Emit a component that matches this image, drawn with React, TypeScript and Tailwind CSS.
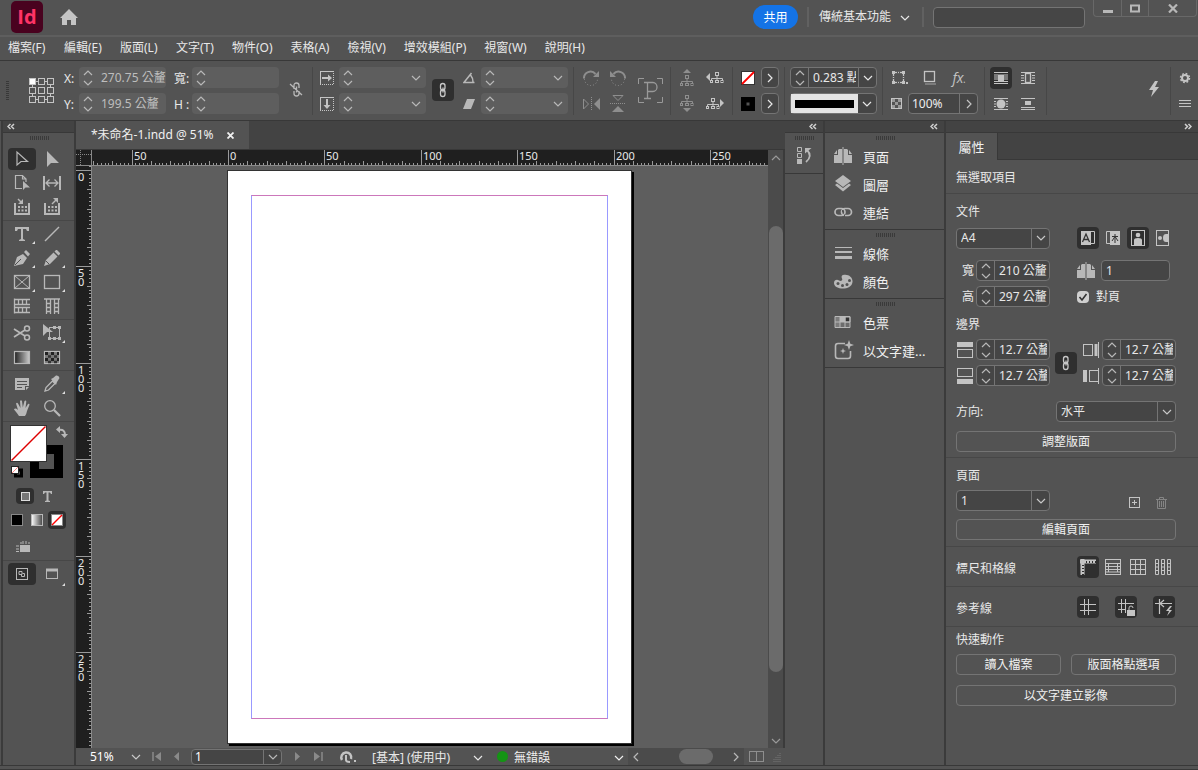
import { ReactNode } from 'react'

interface IconProps {
  w?: number
  h?: number
  className?: string
  children: ReactNode
}

function Icon({ w = 18, h = 18, className = '', children }: IconProps) {
  return (
    <svg
      width={w}
      height={h}
      viewBox={`0 0 ${w} ${h}`}
      fill="none"
      stroke="currentColor"
      className={`shrink-0 ${className}`}
      aria-hidden="true"
    >
      {children}
    </svg>
  )
}

const solid = { fill: 'currentColor', stroke: 'none' }

function Chevron({ dir = 'down', className = '' }: { dir?: string; className?: string }) {
  const paths: Record<string, string> = {
    down: 'M1 3l4 4 4-4',
    up: 'M1 7l4-4 4 4',
    right: 'M3 1l4 4-4 4',
    left: 'M7 1L3 5l4 4',
  }
  return (
    <Icon w={10} h={10} className={className}>
      <path d={paths[dir]} strokeWidth="1.200" />
    </Icon>
  )
}

function Collapse({ right = false }: { right?: boolean }) {
  return (
    <Icon w={8} h={7}>
      <path d={right ? 'M1 1l2.500 2.500L1 6M4.500 1L7 3.500 4.500 6' : 'M3.500 1L1 3.500 3.500 6M7 1L4.500 3.500 7 6'} strokeWidth="1.500" />
    </Icon>
  )
}

function Gripper() {
  return (
    <Icon w={20} h={5} className="text-[#3a3a3a]">
      <path d="M.5 2.500h19" strokeWidth="4" strokeDasharray="1 1" shapeRendering="crispEdges" />
    </Icon>
  )
}

function LinkIcon() {
  return (
    <Icon w={8} h={16} className="text-[#c8c8c8]">
      <rect x="1.500" y="1.500" width="4.500" height="6.500" rx="2.200" strokeWidth="1.300" />
      <rect x="1.500" y="8" width="4.500" height="6.500" rx="2.200" strokeWidth="1.300" />
      <path d="M4 5.500v5" strokeWidth="1.300" />
    </Icon>
  )
}

function PagesIcon() {
  return (
    <Icon w={18} h={20}>
      <path {...solid} d="M8 3v14H0V9h4V4l1-1zM10 3h3l1 1v5h4v8h-8zM0 8l3-4v4zM18 8l-3-4v4z" />
      <path d="M9 1v18" strokeWidth="1" />
    </Icon>
  )
}

function Checker() {
  return (
    <Icon w={11} h={11}>
      <rect x=".5" y=".5" width="10" height="10" />
      <path d="M1 2.500h3m3 0h3M4 5.500h3M1 8.500h3m3 0h3" strokeWidth="3" className="text-[#999]" />
    </Icon>
  )
}

function Sep() {
  return <div className="h-12 w-px shrink-0 bg-[#474747]" />
}

function Spinner({ label }: { label: string }) {
  return (
    <span className="flex w-[17px] shrink-0 flex-col items-center justify-center text-[#b8b8b8]">
      <button aria-label={`增加${label}`}><Chevron dir="up" /></button>
      <button aria-label={`減少${label}`}><Chevron /></button>
    </span>
  )
}

// dim field used by the control bar while nothing is selected
function DimField({ label, value = '', drop = false }: { label: string; value?: string; drop?: boolean }) {
  return (
    <span className="flex h-[21px] w-[87px] items-stretch rounded-sm bg-[#5e5e5e]">
      <Spinner label={label} />
      <input
        aria-label={label}
        defaultValue={value}
        className="w-0 flex-1 bg-transparent pl-[5px] text-[#bdbdbd] outline-none"
      />
      {drop && (
        <button aria-label={`${label}選項`} className="flex w-5 items-center justify-center text-[#b8b8b8]">
          <Chevron />
        </button>
      )}
    </span>
  )
}

function NumberField({ label, value, className = 'w-[74px]' }: { label: string; value: string; className?: string }) {
  return (
    <span className={`flex h-[21px] shrink-0 rounded-sm border border-[#747474] bg-[#454545] ${className}`}>
      <Spinner label={label} />
      <input
        aria-label={label}
        defaultValue={value}
        className="mr-0.5 w-0 flex-1 border-l border-[#747474] bg-transparent pl-1 outline-none"
      />
    </span>
  )
}

function SelectField({ label, value, className = 'w-[94px]' }: { label: string; value: string; className?: string }) {
  return (
    <span className={`flex h-[21px] shrink-0 rounded-sm border border-[#747474] bg-[#454545] ${className}`}>
      <select aria-label={label} className="w-0 flex-1 appearance-none bg-transparent pl-1 outline-none">
        <option>{value}</option>
      </select>
      <span className="flex w-[18px] items-center justify-center border-l border-[#747474] text-[#c8c8c8]">
        <Chevron />
      </span>
    </span>
  )
}

function IconButton({ label, active = false, children }: { label: string; active?: boolean; children: ReactNode }) {
  return (
    <button
      aria-label={label}
      className={`flex size-[22px] shrink-0 items-center justify-center rounded-sm ${active ? 'bg-[#2f2f2f]' : ''}`}
    >
      {children}
    </button>
  )
}

const menus = ['檔案(F)', '編輯(E)', '版面(L)', '文字(T)', '物件(O)', '表格(A)', '檢視(V)', '增效模組(P)', '視窗(W)', '說明(H)']

function TitleBar() {
  return (
    <header className="flex h-[37px] shrink-0 items-start border-b-2 border-[#5e5e5e]">
      <div className="ml-[11px] mt-px flex size-8 items-center justify-center rounded-[5px] bg-[#49021f] font-['Open_Sans'] text-xl font-bold leading-none text-[#ff3366]">
        Id
      </div>
      <button aria-label="首頁" className="ml-[17px] mt-[9px] text-[#c4c4c4]">
        <Icon w={18} h={17}>
          <path {...solid} d="M9 0l9 9h-2v7h-5v-5H7v5H2V9H0z" />
        </Icon>
      </button>
      <div className="ml-auto flex items-start">
        <button className="mt-[5px] h-6 w-[45px] rounded-full bg-[#1473e6] pt-0.5 text-white">共用</button>
        <div className="ml-[9px] mt-[7px] h-5 w-0.5 bg-[#616161]" />
        <button className="ml-[10px] mt-2 flex h-[18px] items-center gap-[9px]">
          傳統基本功能
          <Chevron className="mt-0.5" />
        </button>
        <div className="ml-3 mt-[7px] h-5 w-0.5 bg-[#616161]" />
        <input aria-label="搜尋" className="ml-[9px] mt-[7px] h-[21px] w-[152px] rounded-sm border border-[#747474] bg-[#464646] px-2 outline-none" />
        <div className="ml-2 mr-px flex h-[17px] divide-x divide-[#686868] rounded-b-sm border border-t-0 border-[#686868] text-[#b8b8b8]">
          <button aria-label="最小化" className="flex w-7 items-center justify-center">
            <Icon w={10} h={9}><path d="M0 7.500h10" strokeWidth="3" /></Icon>
          </button>
          <button aria-label="最大化" className="flex w-[27px] items-center justify-center">
            <Icon w={10} h={9}><rect x="1" y="1.500" width="8" height="6" strokeWidth="2" /></Icon>
          </button>
          <button aria-label="關閉" className="flex w-[47px] items-center justify-center">
            <Icon w={10} h={9}><path d="M1 .5l8 8M9 .5l-8 8" strokeWidth="2.200" /></Icon>
          </button>
        </div>
      </div>
    </header>
  )
}

function TreeIcon({ dir }: { dir: 'up' | 'down' | 'left' | 'right' }) {
  const tree = (
    <>
      <rect x="5.500" y=".5" width="3" height="3" />
      <path d="M7 4v2M1.500 9V6.500h11V9M7 6v3" />
      <rect x=".5" y="8.500" width="2" height="2" />
      <rect x="5.500" y="8.500" width="3" height="2" />
      <rect x="11" y="8.500" width="2" height="2" />
    </>
  )
  if (dir === 'up' || dir === 'down') {
    return (
      <Icon w={14} h={17} className="text-[#8e8e8e]">
        <g transform={dir === 'up' ? 'translate(0 6)' : undefined}>{tree}</g>
        <path {...solid} d={dir === 'up' ? 'M7 0l4 4H3z' : 'M3 13h8l-4 4z'} />
      </Icon>
    )
  }
  return (
    <Icon w={18} h={11} className="text-[#c4c4c4]">
      <g transform={dir === 'left' ? 'translate(4 0)' : undefined}>{tree}</g>
      <path {...solid} d={dir === 'left' ? 'M4 1v8L0 5z' : 'M14 1v8l4-4z'} />
    </Icon>
  )
}

function ReferencePoint() {
  const spots = [0, 9, 18]
  return (
    <Icon w={25} h={25} className="text-[#c4c4c4]">
      <path d="M6 3.500h3m6 0h4M6 21.500h3m6 0h4M3.500 6v4m0 5v4M21.500 6v4m0 5v4" />
      {spots.map((y) =>
        spots.map((x) => (
          <rect key={`${x}-${y}`} x={x + 0.5} y={y + 0.5} width="6" height="6" fill={x + y === 0 ? '#fff' : 'none'} />
        )),
      )}
    </Icon>
  )
}

function WrapIcon({ children }: { children?: ReactNode }) {
  return (
    <Icon w={14} h={14} className="text-[#c4c4c4]">
      <path d="M0 1.500h14M0 12.500h14" />
      {children}
    </Icon>
  )
}

function ControlBar() {
  return (
    <div className="flex h-[60px] shrink-0 items-start overflow-hidden border-t border-[#383838] pt-1.5">
      <Icon w={3} h={20} className="ml-1.5 mt-3.5 text-[#383838]">
        <path d="M1.500 0v20" strokeWidth="3" strokeDasharray="1 1" />
      </Icon>
      <button aria-label="參考點" className="ml-5 mt-[11px]"><ReferencePoint /></button>

      <div className="ml-2.5 flex flex-col gap-[5px]">
        <label className="flex items-center"><span className="w-[15px] pt-0.5">X:</span><DimField label="X 位置" value="270.75 公釐" /></label>
        <label className="flex items-center"><span className="w-[15px] pt-0.5">Y:</span><DimField label="Y 位置" value="199.5 公釐" /></label>
      </div>
      <div className="ml-2 flex flex-col gap-[5px]">
        <label className="flex items-center"><span className="w-[18px] whitespace-nowrap pt-0.5">寬:</span><DimField label="寬度" /></label>
        <label className="flex items-center"><span className="w-[18px] whitespace-nowrap pt-0.5">H :</span><DimField label="高度" /></label>
      </div>
      <button aria-label="強制寬高等比例" className="ml-[10px] mr-[9px] mt-[15px] text-[#b8b8b8]">
        <Icon w={14} h={15}>
          <path d="M5 7V3.500q0-2.500 2.500-2.500T10 3.500V6M5 9v2.500Q5 14 7.500 14t2.500-2.500V9M7.500 4.500v6M1 2l12 11" strokeWidth="1.300" />
        </Icon>
      </button>
      <Sep />

      <div className="ml-[7px] flex flex-col gap-[5px] text-[#c4c4c4]">
        <div className="flex items-center gap-[5px]">
          <Icon w={14} h={14}>
            <path d="M2 13.500h12M13.500 2v12" strokeDasharray="1 1" />
            <path d="M0 .5h14M.5 0v14" />
            <path d="M2 7h7" strokeWidth="2" /><path {...solid} d="M8 3.500L12 7l-4 3.500z" />
          </Icon>
          <DimField label="X 縮放" drop />
        </div>
        <div className="flex items-center gap-[5px]">
          <Icon w={14} h={14}>
            <path d="M2 13.500h12M13.500 2v12" strokeDasharray="1 1" />
            <path d="M0 .5h14M.5 0v14" />
            <path d="M7 2v7" strokeWidth="2" /><path {...solid} d="M3.500 8h7L7 12z" />
          </Icon>
          <DimField label="Y 縮放" drop />
        </div>
      </div>
      <button aria-label="強制縮放等比例" className="ml-1.5 mt-3 flex size-[22px] items-center justify-center rounded-sm bg-[#2f2f2f]">
        <LinkIcon />
      </button>
      <div className="ml-[9px] mr-[5px] flex flex-col gap-[5px] text-[#b8b8b8]">
        <div className="flex items-center gap-1.5">
          <Icon w={12} h={12}><path d="M8.500 1L1 10.500h10.500M7.500 3q2.500 3 2.500 7" strokeWidth="1.500" /></Icon>
          <DimField label="旋轉角度" drop />
        </div>
        <div className="flex items-center gap-1.5">
          <Icon w={12} h={12}><path {...solid} d="M4 1h8l-4 10H0z" /></Icon>
          <DimField label="傾斜角度" drop />
        </div>
      </div>
      <Sep />

      <div className="ml-[9px] grid grid-cols-[16px_16px] gap-x-[11px] gap-y-[5px] text-[#8e8e8e]">
        <button aria-label="順時針旋轉" className="flex h-[21px] items-center">
          <Icon w={16} h={16}>
            <path d="M1 8.500a6.500 6.500 0 0 1 11.500-4.500" strokeWidth="2" /><path {...solid} d="M16 1v6h-6z" />
            <path d="M1.500 9a6.500 6.500 0 0 0 13 0" strokeDasharray="1 2" />
          </Icon>
        </button>
        <button aria-label="逆時針旋轉" className="flex h-[21px] items-center">
          <Icon w={16} h={16}>
            <path d="M15 8.500A6.500 6.500 0 0 0 3.500 4" strokeWidth="2" /><path {...solid} d="M0 1v6h6z" />
            <path d="M14.500 9a6.500 6.500 0 0 1-13 0" strokeDasharray="1 2" />
          </Icon>
        </button>
        <button aria-label="水平翻轉" className="flex h-[21px] items-center">
          <Icon w={17} h={14}>
            <path d="M.5 2v10l5-5z" /><path {...solid} d="M17 1v12l-6-6z" /><path d="M8.500 0v14" strokeDasharray="1 1" />
          </Icon>
        </button>
        <button aria-label="垂直翻轉" className="flex h-[21px] items-center">
          <Icon w={16} h={17}>
            <path d="M3 .5h10l-5 5z" /><path {...solid} d="M2 17h12l-6-6z" /><path d="M0 8.500h16" strokeDasharray="1 1" />
          </Icon>
        </button>
      </div>
      <div className="ml-3 mr-[7px] mt-[11px] flex size-[25px] items-center justify-center text-[#999]">
        <Icon w={25} h={25}>
          <path d="M.5 6V.5H6M19 .5h5.500V6M.5 19v5.500H6M19 24.500h5.500V19" />
          <path d="M6 4.500h9a4 4.500 0 0 1 0 9H9.500M9.500 4.500v16M6 20.500h7" strokeWidth="1.300" />
        </Icon>
      </div>
      <Sep />

      <div className="ml-[9px] mr-2 grid grid-cols-[14px_18px] gap-x-3 gap-y-[5px]">
        <button aria-label="選取容器" className="flex h-[21px] items-center"><TreeIcon dir="up" /></button>
        <button aria-label="上一個物件" className="flex h-[21px] items-center"><TreeIcon dir="left" /></button>
        <button aria-label="選取內容" className="flex h-[21px] items-center"><TreeIcon dir="down" /></button>
        <button aria-label="下一個物件" className="flex h-[21px] items-center"><TreeIcon dir="right" /></button>
      </div>
      <Sep />

      <div className="ml-[8px] mr-[5px] flex flex-col gap-[5px]">
        <div className="flex h-[21px] items-center gap-1.5">
          <Icon w={14} h={14}>
            <rect x=".5" y=".5" width="13" height="13" fill="#fff" stroke="#333" /><path d="M1 13L13 1" stroke="#f00" strokeWidth="1.800" />
          </Icon>
          <button aria-label="填色選項" className="flex h-[21px] w-[18px] items-center justify-center rounded-sm border border-[#747474] bg-[#454545]"><Chevron dir="right" /></button>
        </div>
        <div className="flex h-[21px] items-center gap-1.5">
          <Icon w={14} h={14}>
            <rect width="14" height="14" fill="#000" stroke="none" /><rect x="5.500" y="5.500" width="3" height="3" fill="#535353" stroke="none" />
          </Icon>
          <button aria-label="線條選項" className="flex h-[21px] w-[18px] items-center justify-center rounded-sm border border-[#747474] bg-[#454545]"><Chevron dir="right" /></button>
        </div>
      </div>
      <Sep />

      <div className="ml-[5px] mr-[5px] flex w-[87px] flex-col gap-[5px]">
        <div className="flex">
          <NumberField label="線條寬度" value="0.283 點" className="w-[69px] rounded-r-none" />
          <button aria-label="線條寬度選項" className="-ml-px flex w-[19px] items-center justify-center rounded-r-sm border border-[#747474] bg-[#454545]"><Chevron /></button>
        </div>
        <button aria-label="線條樣式" className="flex h-[21px] rounded-sm border border-[#747474] bg-[#454545]">
          <span className="flex h-full flex-1 items-center bg-[#e4e4e4] px-1"><span className="h-2 w-full bg-black" /></span>
          <span className="flex h-full w-[18px] items-center justify-center"><Chevron /></span>
        </button>
      </div>
      <Sep />

      <div className="ml-2 mr-1.5 flex w-[87px] flex-col gap-[5px] text-[#c4c4c4]">
        <div className="flex h-[21px] items-center justify-between pl-px pr-3">
          <button aria-label="轉角選項">
            <Icon w={16} h={14}>
              <rect x="1.500" y="1.500" width="10" height="10" strokeWidth="1.300" />
              <path d="M5 1.500h3M5 11.500h3M1.500 5v3M11.500 5v3" stroke="#535353" strokeDasharray="1 1" strokeWidth="2" />
              <path {...solid} d="M0 0h3v3H0zM10 0h3v3h-3zM0 10h3v3H0zM10 10h3v3h-3zM14 11h2v2h-2z" />
            </Icon>
          </button>
          <button aria-label="陰影">
            <Icon w={14} h={15}><rect x="1.500" y="1.500" width="10" height="10" strokeWidth="1.300" /><path d="M2 14h11" stroke="#7c7c7c" strokeWidth="2" /></Icon>
          </button>
          <button aria-label="效果" className="font-['Open_Sans'] text-sm italic leading-none">fx<span className="text-[10px]">.</span></button>
        </div>
        <div className="flex items-center gap-[6px]">
          <Checker />
          <span className="flex h-[21px] w-[70px] rounded-sm border border-[#747474] bg-[#454545]">
            <input aria-label="不透明度" defaultValue="100%" className="w-0 flex-1 bg-transparent pl-[3px] text-[#eee] outline-none" />
            <button aria-label="不透明度選項" className="flex w-[18px] items-center justify-center border-l border-[#747474]"><Chevron dir="right" /></button>
          </span>
        </div>
      </div>
      <Sep />

      <div className="ml-[5px] mr-[7px] grid grid-cols-[22px_22px] gap-x-[5px] gap-y-1">
        <IconButton label="無繞圖排文" active>
          <WrapIcon><path d="M0 4h14M0 6h14M0 8h14M0 10.500h14" /><path {...solid} d="M4 4h6v6H4z" /></WrapIcon>
        </IconButton>
        <IconButton label="圍繞邊界方框">
          <WrapIcon><path d="M0 4.500h3m8 0h3M0 7h3m8 0h3M0 9.500h3m8 0h3" /><rect x="4.500" y="2.500" width="5" height="9" strokeWidth="1.300" /></WrapIcon>
        </IconButton>
        <IconButton label="圍繞物件形狀">
          <WrapIcon><path d="M0 4.500h2m10 0h2M0 7h2m10 0h2M0 9.500h2m10 0h2" /><circle {...solid} cx="7" cy="7" r="4.500" /></WrapIcon>
        </IconButton>
        <IconButton label="跳過物件">
          <WrapIcon><path {...solid} d="M4 4h6v4H4z" /><path d="M0 10.500h14" /></WrapIcon>
        </IconButton>
      </div>
      <Sep />

      <button aria-label="快速套用" className="ml-auto mr-[11px] mt-[14px] text-[#c4c4c4]">
        <Icon w={10} h={16}><path {...solid} d="M6 0L0 9h4l-2 7 8-10H6l3-6z" /></Icon>
      </button>
      <Sep />
      <div className="ml-2 mr-[7px] flex flex-col gap-[5px] text-[#c4c4c4]">
        <button aria-label="自訂控制面板" className="flex h-[21px] items-center justify-center">
          <Icon w={12} h={12}><circle cx="6" cy="6" r="3" strokeWidth="2" /><circle cx="6" cy="6" r="4.500" strokeWidth="1.500" strokeDasharray="1.770 1.770" /></Icon>
        </button>
        <button aria-label="面板選單" className="flex h-[21px] items-center">
          <Icon w={12} h={9}><path d="M0 1.500h12M0 4.500h12M0 7.500h12" /></Icon>
        </button>
      </div>
    </div>
  )
}

interface Tool {
  name: string
  more?: boolean
  icon: ReactNode
}

const toolGroups: Tool[][] = [
  [
    { name: '選取工具', icon: <path d="M4 2v13l4-3.500h6.500z" strokeWidth="1.200" /> },
    { name: '直接選取工具', icon: <path {...solid} d="M4 1v16l4-4h8z" /> },
    { name: '頁面工具', icon: <><path d="M9 14.500H2.500v-13h7L13 5v3M9.500 1.500V5H13" strokeWidth="1.200" /><path {...solid} d="M10 7v9l2.500-2.500H17z" /></> },
    { name: '間隙工具', icon: <><path d="M1 2v14M17 2v14" strokeWidth="2" /><path d="M3 9h12M6.500 5.500L3 9l3.500 3.500M11.500 5.500L15 9l-3.500 3.500" strokeWidth="1.300" /></> },
    { name: '內容收集器', icon: <><path d="M3 6H2v10h14V6h-1" strokeWidth="2" /><path {...solid} d="M5 8h2v2H5zm3.500 0h2v2h-2zM12 8h2v2h-2zM5 11.500h2v2H5zm3.500 0h2v2h-2zm3.500 0h2v2h-2zM10 1v5H5z" /><path d="M5 1l4 4" strokeWidth="1.500" /></> },
    { name: '內容置入器', icon: <><path d="M3 6H2v10h14V6h-1" strokeWidth="2" /><path {...solid} d="M5 8h2v2H5zm3.500 0h2v2h-2zM12 8h2v2h-2zM5 11.500h2v2H5zm3.500 0h2v2h-2zm3.500 0h2v2h-2zM15 0v5l-5-5z" /><path d="M14 1L9 6" strokeWidth="1.500" /></> },
  ],
  [
    { name: '文字工具', more: true, icon: <path {...solid} d="M2 2h14v4h-2l-1-2h-3v10l2 1v1H6v-1l2-1V4H5L4 6H2z" /> },
    { name: '線段工具', icon: <path d="M2 16L16 2" strokeWidth="1.500" /> },
    { name: '鋼筆工具', more: true, icon: <><path {...solid} d="M1 17L4 8l6-3 4 4-4 6zM11 3l2-2 4 4-2 2.500z" /><path d="M2 16l6-6" stroke="#535353" /></> },
    { name: '鉛筆工具', more: true, icon: <><path {...solid} d="M1 17l2-6 7.500-7.500 4 4L7 15zM11.500 2.500L13 1h1l3 3v1l-1.500 1.500z" /><path d="M3 12l3 3" stroke="#535353" /></> },
    { name: '矩形框架工具', more: true, icon: <><rect x="1.500" y="2.500" width="15" height="13" strokeWidth="1.300" /><path d="M2 3l14 12M16 3L2 15" /></> },
    { name: '矩形工具', more: true, icon: <rect x="1.500" y="2.500" width="15" height="13" strokeWidth="1.300" /> },
    { name: '水平格點工具', icon: <path d="M1.500 1.500v15M1 2.500h16M1 7.500h16M1 10.500h16M1 15.500h16M5.500 3v4m4-4v4m4-4v4M5.500 11v5m4-5v5m4-5v5" strokeWidth="1.300" /> },
    { name: '垂直格點工具', icon: <path d="M1 2h16M3.500 2v15m4-15v15m4-15v15m4-15v15M4 6.500h3m-3 4h3m-3 4h3M12 6.500h3m-3 4h3m-3 4h3" strokeWidth="1.300" /> },
  ],
  [
    { name: '剪刀工具', icon: <><circle cx="14" cy="4.500" r="2.500" strokeWidth="1.500" /><circle cx="14" cy="13.500" r="2.500" strokeWidth="1.500" /><path d="M1 5l11 7M1 13l11-7" strokeWidth="1.700" /></> },
    { name: '任意變形工具', more: true, icon: <><rect x="6.500" y="3.500" width="10" height="11" /><path {...solid} d="M0 0v12l4-4h6zM5 13h3v3H5zM15 2h3v3h-3zM15 13h3v3h-3zM10 2h3v3h-3zM10 13h3v3h-3z" /></> },
    { name: '漸層色票工具', icon: <rect x="1.500" y="3.500" width="15" height="12" fill="url(#toolGradient)" strokeWidth="1.200" /> },
    { name: '漸層羽化工具', icon: <><rect x="1.500" y="3.500" width="15" height="12" strokeWidth="1.200" fill="#777" /><path d="M2 5.500h14M2 11.500h14" stroke="#222" strokeWidth="3" strokeDasharray="3 3" /><path d="M5 8.500h11M5 14h11" stroke="#333" strokeWidth="2.500" strokeDasharray="3 3" /></> },
  ],
  [
    { name: '備註工具', icon: <><path {...solid} d="M2 3h14v8h-4v4H2zM13 12h3l-3 3z" /><path d="M4 6.500h10M4 9.500h10M4 12.500h5" stroke="#535353" /></> },
    { name: '滴管工具', more: true, icon: <><path d="M2 16l1-3.500L9.500 6 12 8.500 5.500 15z" strokeWidth="1.300" /><path {...solid} d="M8 4l2-1 3-2.500q3-.5 3.500 2.500L14 7l-1 3z" /></> },
    { name: '手形工具', icon: <path {...solid} d="M6 17q-2-3-5-6.500 1-2 4 .5L3 4.500q1-1.500 2 0L7.500 9 7 2q1-1.500 2 0l.8 6.500L11.500 2q1.500-1 1.800.5L12.500 9 15 5q1.500-.8 1.500.8L14 12q-.5 3-2 5z" /> },
    { name: '縮放顯示工具', icon: <><circle cx="7" cy="7" r="5.300" strokeWidth="1.300" /><path d="M11 11l6 6" strokeWidth="2.300" /></> },
  ],
]

function ToolPanel() {
  return (
    <aside className="flex w-[75px] shrink-0 flex-col border-x-2 border-[#3b3b3b] text-[#b8b8b8]">
      <button aria-label="收合工具" className="flex h-3 items-center border-b border-[#383838] bg-[#434343] pl-1 text-[#d0d0d0]"><Collapse /></button>
      <div className="flex h-[13px] items-start justify-center pt-[2px]"><Gripper /></div>
      <svg width="0" height="0" className="absolute" aria-hidden="true">
        <linearGradient id="toolGradient"><stop stopColor="#222" /><stop offset="1" stopColor="#ccc" /></linearGradient>
        <linearGradient id="swatchGradient"><stop stopColor="#fff" /><stop offset="1" stopColor="#444" /></linearGradient>
      </svg>
      {toolGroups.map((group, g) => (
        <div key={g} className="border-b border-[#474747] py-px">
          <div className="grid grid-cols-[30px_30px] pl-1">
            {group.map((tool, i) => (
              <button
                key={tool.name}
                aria-label={tool.name}
                className={`relative flex h-6 items-center justify-center ${g === 0 && i === 0 ? 'mx-px my-px h-[22px] rounded-sm bg-[#2f2f2f]' : ''}`}
              >
                <Icon>{tool.icon}</Icon>
                {tool.more && <Icon w={3} h={3} className="absolute bottom-0.5 right-0.5 text-[#ddd]"><path {...solid} d="M3 0v3H0z" /></Icon>}
              </button>
            ))}
          </div>
        </div>
      ))}
      <div className="px-[7px] pt-[3px]">
        <button aria-label="填色與線條" className="block">
          <Icon w={58} h={54}>
            <path d="M24.500 24.500h24v24h-24z" stroke="#000" strokeWidth="9" />
            <rect x=".5" y=".5" width="36" height="36" fill="#fff" stroke="#333" />
            <path d="M1.500 35.500l34-34" stroke="#d00" strokeWidth="1.500" />
            <path d="M49 5q6-1 6 5" strokeWidth="2" /><path {...solid} d="M50 1v7l-4-3.500zM51 9h7l-3.500 4z" />
            <rect x="5.500" y="45" width="6" height="6" stroke="#000" strokeWidth="3" /><rect x="1.500" y="41.500" width="7" height="7" fill="#fff" stroke="#222" />
            <path d="M2 48l6-6" stroke="#f88" />
          </Icon>
        </button>
      </div>
      <div className="mt-2 flex h-[18px] items-center gap-[9px] pl-[13px]">
        <button aria-label="格式設定影響容器" className="flex h-4 w-[18px] items-center justify-center rounded-sm bg-[#2f2f2f]">
          <Icon w={9} h={9}><rect x=".5" y=".5" width="8" height="8" fill="#777" stroke="#ddd" /></Icon>
        </button>
        <button aria-label="格式設定影響文字"><Icon w={10} h={11}><path {...solid} d="M0 0h9v3H8L7 1.500H5.500v8L7 10v1H2v-1l1.500-.5v-8H2L1 3H0z" /></Icon></button>
      </div>
      <div className="mt-[5px] flex h-5 items-center pl-2">
        <button aria-label="套用顏色"><Icon w={13} h={13}><rect x=".5" y=".5" width="11" height="11" fill="#000" stroke="#888" /></Icon></button>
        <button aria-label="套用漸層" className="ml-[7px]"><Icon w={13} h={13}><rect x=".5" y=".5" width="11" height="11" fill="url(#swatchGradient)" /></Icon></button>
        <button aria-label="套用無" className="ml-1 flex size-[18px] items-center justify-center rounded-sm bg-[#2f2f2f]">
          <Icon w={12} h={12}><rect x=".5" y=".5" width="11" height="11" fill="#fff" stroke="#888" /><path d="M1 11L11 1" stroke="#f00" strokeWidth="1.500" /></Icon>
        </button>
      </div>
      <button aria-label="檢視選項" className="mt-2 flex h-[18px] items-center pl-[13px]">
        <Icon w={15} h={12}><path {...solid} d="M4 4h10v7H4z" /><path d="M5 1v2m2-3v3m3-3v3m3-2v2M0 5h3M0 8h3M0 10.500h3" /></Icon>
      </button>
      <div className="mt-1 grid grid-cols-[28px_28px] gap-x-0.5 border-t border-[#474747] pl-[5px] pt-0.5">
        <button aria-label="正常模式" className="flex h-[22px] items-center justify-center rounded-sm bg-[#2f2f2f]">
          <Icon w={12} h={12}><rect x=".5" y=".5" width="11" height="11" /><path d="M3 3.500h3v3H3zM6.500 5.500h2v3h-3V7" /></Icon>
        </button>
        <button aria-label="螢幕模式" className="relative flex h-[22px] items-center justify-center">
          <Icon w={12} h={12}><rect x=".5" y="1.500" width="11" height="9" /><path d="M0 2h12" strokeWidth="3" /></Icon>
          <Icon w={3} h={3} className="absolute -bottom-px right-px text-[#ddd]"><path {...solid} d="M3 0v3H0z" /></Icon>
        </button>
      </div>
    </aside>
  )
}

// pixels for one millimetre at the current zoom level
const SCALE = 1.928
const marks = Array.from({ length: 190 }, (_, i) => (i - 35) * 2)

function Ruler({ origin, vertical = false }: { origin: number; vertical?: boolean }) {
  return (
    <svg
      className={vertical ? 'w-4 flex-1' : 'h-4 w-full overflow-visible'}
      width={vertical ? 16 : 100}
      height={vertical ? 100 : 16}
      aria-hidden="true"
    >
      {marks.map((mm) => {
        const pos = Math.round(origin + mm * SCALE) + 0.5
        const len = mm % 50 === 0 ? 16 : mm % 10 === 0 ? 5 : 3
        return vertical ? (
          <path key={mm} d={`M${16 - len} ${pos}h${len}`} stroke="#9a9a9a" />
        ) : (
          <path key={mm} d={`M${pos} ${16 - len}v${len}`} stroke="#9a9a9a" />
        )
      })}
      {marks
        .filter((mm) => mm % 50 === 0)
        .map((mm) => {
          const pos = Math.round(origin + mm * SCALE)
          const text = String(Math.abs(mm))
          if (!vertical) {
            return <text key={mm} x={pos + 2} y={10} fontSize="11" fill="#e8e8e8" stroke="none">{text}</text>
          }
          return (
            <text key={mm} y={pos + 2} fontSize="11" fill="#e8e8e8" stroke="none">
              {text.split('').map((digit, i) => (
                <tspan key={i} x={2} dy={9}>{digit}</tspan>
              ))}
            </text>
          )
        })}
      <path d={vertical ? 'M15.500 0v1000' : 'M0 15.500h2000'} stroke="#8a8a8a" />
    </svg>
  )
}

function StatusBar() {
  return (
    <div className="flex h-[17px] shrink-0 items-center text-[#b8b8b8]">
      <label className="ml-[14px] flex w-[51px] items-center justify-between text-white">
        <input aria-label="縮放層級" defaultValue="51%" className="w-8 bg-transparent outline-none" />
        <Chevron className="text-[#c8c8c8]" />
      </label>
      <button aria-label="第一頁" className="ml-[11px] text-[#8a8a8a]"><Icon w={9} h={9}><path d="M1 0v9" strokeWidth="1.500" /><path {...solid} d="M9 0v9L3 4.500z" /></Icon></button>
      <button aria-label="上一頁" className="ml-[13px] text-[#8a8a8a]"><Icon w={5} h={9}><path {...solid} d="M5 0v9L0 4.500z" /></Icon></button>
      <span className="ml-3 flex h-4 w-[91px] rounded-sm border border-[#747474] bg-[#454545]">
        <input aria-label="頁碼" defaultValue="1" className="w-0 flex-1 bg-transparent pl-[3px] text-white outline-none" />
        <button aria-label="選擇頁面" className="flex w-[18px] items-center justify-center border-l border-[#747474]"><Chevron /></button>
      </span>
      <button aria-label="下一頁" className="ml-[13px] text-[#8a8a8a]"><Icon w={5} h={9}><path {...solid} d="M0 0v9l5-4.500z" /></Icon></button>
      <button aria-label="最後一頁" className="ml-[14px] text-[#8a8a8a]"><Icon w={9} h={9}><path d="M8 0v9" strokeWidth="1.500" /><path {...solid} d="M0 0v9l6-4.500z" /></Icon></button>
      <button aria-label="預檢選項" className="ml-4 text-[#c4c4c4]">
        <Icon w={18} h={13}><path d="M3 10a5 5 0 1 1 9-1" strokeWidth="2.500" /><path d="M7 5v5q0 2 4 2" strokeWidth="2" /><path {...solid} d="M15 10h2v2h-2z" /></Icon>
      </button>
      <button className="ml-[15px] flex w-[111px] items-center justify-between pt-0.5 text-[#e8e8e8]">[基本] (使用中)<Chevron /></button>
      <span className="ml-[14px] size-[11px] rounded-full bg-[#149414]" />
      <button className="ml-[6px] flex min-w-0 flex-1 items-center justify-between pr-1 pt-0.5 text-[#f0f0f0]">無錯誤<Chevron /></button>
      <div className="flex h-full w-[116px] items-center justify-between bg-[#4b4b4b] px-[3px]">
        <Chevron dir="left" /><span className="ml-5 h-[15px] w-[34px] rounded-full bg-[#6b6b6b]" /><Chevron dir="right" />
      </div>
      <button aria-label="分割版面" className="ml-[5px]"><Icon w={15} h={12} className="text-[#8e8e8e]"><rect x=".5" y=".5" width="14" height="10" /><path d="M7.500 0v11" /></Icon></button>
      <Icon w={10} h={10} className="ml-[7px] mr-1 text-[#777]">
        <path d="M9 1v9M7 3v7M5 5v5M3 7v3" strokeDasharray="1 1" />
      </Icon>
    </div>
  )
}

function DocumentWindow() {
  return (
    <main className="flex min-w-0 flex-1 flex-col">
      <div className="flex h-[29px] shrink-0 border-b border-[#383838] bg-[#434343]">
        <div className="flex w-[173px] items-center bg-[#535353] pl-[15px] text-[#f0f0f0]">
          <span className="flex-1 whitespace-nowrap">*未命名-1.indd @ 51%</span>
          <button aria-label="關閉文件" className="mr-[15px]"><Icon w={7} h={7}><path d="M.5.500l6 6m0-6l-6 6" strokeWidth="1.800" /></Icon></button>
        </div>
      </div>
      <div className="flex min-h-0 flex-1">
        <div className="flex min-w-0 flex-1 flex-col">
          <div className="flex h-4 bg-[#1f1f1f]">
            <Icon w={16} h={16} className="text-[#888]"><path d="M4.500 0v16M0 4.500h16" strokeDasharray="1 1" /><path d="M15.500 0v16M0 15.500h16" /></Icon>
            <div className="min-w-0 flex-1 overflow-x-clip"><Ruler origin={136} /></div>
          </div>
          <div className="flex min-h-0 flex-1 overflow-hidden">
            <div className="flex w-4 flex-col bg-[#1f1f1f]"><Ruler vertical origin={4} /></div>
            <div className="min-w-0 flex-1 overflow-hidden bg-[#5e5e5e] pl-[135px] pt-1">
              <div className="h-[574px] w-[405px] border border-[#333] bg-white pb-6 pl-[23px] pr-[23px] pt-6 shadow-[2px_2px_0_#000]">
                <div className="h-full border border-x-[#9999ff] border-y-[#cc77bb]" />
              </div>
            </div>
          </div>
        </div>
        <div className="flex w-[17px] flex-col items-center border-r-2 border-[#3b3b3b] bg-[#4b4b4b] text-[#9a9a9a]">
          <Chevron dir="up" className="mt-[3px]" />
          <div className="flex w-full flex-1 flex-col pb-[64px] pl-px pt-[63px]"><span className="w-full flex-1 rounded-full bg-[#6b6b6b]" /></div>
          <Chevron className="mb-0.5" />
        </div>
      </div>
      <StatusBar />
    </main>
  )
}

const dockGroups = [
  [
    { label: '頁面', icon: <PagesIcon /> },
    { label: '圖層', icon: <Icon><path {...solid} d="M9 0l8 6-8 6-8-6zM1 10l2-1.500 6 4.500 6-4.500 2 1.500-8 6.500z" /></Icon> },
    { label: '連結', icon: <Icon w={19} h={11}><rect x="7.500" y="1.500" width="10" height="7" rx="3.500" strokeWidth="1.700" /><rect x="1" y="1.500" width="10" height="7" rx="3.500" strokeWidth="1.700" /><path d="M8.500 3v2M10.500 10V7.500" stroke="#535353" /></Icon> },
  ],
  [
    { label: '線條', icon: <Icon w={18} h={14}><path d="M1 1.500h17" /><path d="M1 6h17" strokeWidth="2" /><path d="M1 11.500h17" strokeWidth="3" /></Icon> },
    { label: '顏色', icon: <Icon w={19} h={15}><path {...solid} d="M9 1c5-1.500 10 2 9.500 7-.5 5-6 7-11.500 6.500C3 14 0 12 0 9c0-3 3-4 5-2.500 2 1 4 0 3-2C7.300 3 7.500 1.500 9 1z" /><g fill="#535353" stroke="none"><circle cx="4" cy="9.500" r="1.500" /><circle cx="8.500" cy="11.500" r="1.500" /><circle cx="13" cy="10.500" r="1.500" /><circle cx="15.500" cy="6.500" r="1.500" /></g></Icon> },
  ],
  [
    { label: '色票', icon: <Icon w={17} h={12}><path {...solid} d="M6 1h5v5H6z" /><path {...solid} d="M1 1h5v5H1zM1 6h5v5H1z" opacity=".4" /><path d="M11 1h5v5h-5z" fill="#333" /><path {...solid} d="M6 6h10v5H6z" opacity=".25" /><path d="M1 .5h15v11H1zM6 1v10m5-10v10M1 6h15" /></Icon> },
    { label: '以文字建...', icon: <Icon w={20} h={20}><path d="M11 3.500H4Q1.500 3.500 1.500 6v10q0 2.500 2.500 2.500h10q2.500 0 2.500-2.500v-5" strokeWidth="1.600" /><path {...solid} d="M15 0l1.300 3.700L20 5l-3.700 1.300L15 10l-1.300-3.700L10 5l3.700-1.300zM9 8l.8 2.200L12 11l-2.200.8L9 14l-.8-2.200L6 11l2.200-.8z" /></Icon> },
  ],
]

function Docks() {
  return (
    <>
      <aside className="flex w-[40px] shrink-0 flex-col border-r-2 border-[#3b3b3b]">
        <button aria-label="展開面板" className="flex h-3 items-center justify-end border-b border-[#383838] bg-[#434343] pr-[6px] text-[#d0d0d0]"><Collapse /></button>
        <div className="flex h-[41px] flex-col items-center border-b border-[#383838] pt-0.5">
          <Gripper />
          <button aria-label="內容" className="mt-1.5 text-[#b8b8b8]">
            <Icon w={16} h={18}>
              <path d="M1.500 1.500h4v4h-4zM1.500 7.500h4v4h-4z" /><path {...solid} d="M1 13h5v5H1z" />
              <path d="M11 4q6 6-1 12" strokeWidth="1.800" /><path {...solid} d="M9 2h6.500L9 7.500z" />
            </Icon>
          </button>
        </div>
      </aside>
      <aside className="flex w-[121px] shrink-0 flex-col border-r-2 border-[#3b3b3b]">
        <button aria-label="展開面板群組" className="flex h-3 items-center justify-end border-b border-[#383838] bg-[#434343] pr-[6px] text-[#d0d0d0]"><Collapse /></button>
        {dockGroups.map((group, i) => (
          <div key={i} className="flex flex-col border-b border-[#383838] pb-[3px] pt-0.5">
            <div className="mb-0.5 flex justify-center"><Gripper /></div>
            {group.map((panel) => (
              <button key={panel.label} className="flex h-7 items-center pl-[9px] text-[13px] text-[#f0f0f0]">
                <span className="flex w-[29px] items-center text-[#b8b8b8]">{panel.icon}</span>
                <span className="pt-0.5">{panel.label}</span>
              </button>
            ))}
          </div>
        ))}
      </aside>
    </>
  )
}

function Section({ className = '', children }: { className?: string; children: ReactNode }) {
  return <section className={`border-b border-[#474747] pl-2.5 pr-[22px] ${className}`}>{children}</section>
}

function WideButton({ children }: { children: ReactNode }) {
  return <button className="h-[21px] w-full rounded-sm border border-[#747474] pt-px text-[#f0f0f0]">{children}</button>
}

function MarginIcon({ side }: { side: 'top' | 'bottom' | 'left' | 'right' }) {
  const art = {
    top: <><path d="M0 2.500h16" strokeWidth="5" /><rect x=".5" y="7.500" width="15" height="8" /></>,
    bottom: <><path d="M0 13.500h16" strokeWidth="5" /><rect x=".5" y=".5" width="15" height="8" /></>,
    left: <><rect x=".5" y="2.500" width="9" height="11" /><path d="M13 2v12" strokeWidth="3" /><path d="M15.500 0v16" /></>,
    right: <><path d="M2 2v12" strokeWidth="4" /><rect x="6.500" y="2.500" width="9" height="11" /><path d="M15.500 0v16" /></>,
  }
  return <Icon w={16} h={16} className="ml-px text-[#c4c4c4]">{art[side]}</Icon>
}

function PropertiesPanel() {
  return (
    <aside className="flex w-[252px] shrink-0 flex-col text-[#e8e8e8]">
      <button aria-label="收合內容" className="flex h-3 shrink-0 items-center justify-end border-b border-[#383838] bg-[#434343] pr-1.5 text-[#d0d0d0]"><Collapse right /></button>
      <div className="flex h-[27px] shrink-0 bg-[#434343]">
        <button className="w-[52px] border-r border-[#383838] bg-[#535353] text-[13px] text-[#f0f0f0]">屬性</button>
        <div className="flex-1 border-b border-[#383838]" />
      </div>
      <Section className="flex h-[34px] items-center pt-0.5">無選取項目</Section>

      <Section className="pb-[5px] pt-[9px]">
        <h2 className="h-6 leading-[18px]">文件</h2>
        <div className="flex items-center justify-between pr-[2px]">
          <SelectField label="頁面大小" value="A4" />
          <div className="flex w-[97px] items-center gap-[3px] text-[#c4c4c4]">
            <IconButton label="由左至右裝訂" active>
              <Icon w={14} h={16}><path {...solid} d="M0 1h10v14H0z" /><path d="M10 1.500h3.500v12H10" /><path d="M1.500 12L5 4l3.500 8M3 9.500h4" stroke="#333" strokeWidth="1.300" /></Icon>
            </IconButton>
            <IconButton label="由右至左裝訂">
              <Icon w={14} h={16}><path {...solid} d="M4 1h10v14H4z" /><path d="M4 1.500H.5v12H4" /><path d="M9 4v9M6 6.500h6M9 6.500L6 11M9 6.500l3 4.500" stroke="#333" /></Icon>
            </IconButton>
            <IconButton label="直向" active>
              <Icon w={14} h={16}><rect x=".5" y=".5" width="13" height="15" /><circle {...solid} cx="7" cy="5" r="2.300" /><path {...solid} d="M3 15v-5q0-2 4-2t4 2v5z" /></Icon>
            </IconButton>
            <IconButton label="橫向">
              <Icon w={14} h={16}><rect x=".5" y=".5" width="12" height="15" /><circle {...solid} cx="4" cy="8" r="2" /><path {...solid} d="M13 4h-3Q7 4 7 8t3 4h3z" /></Icon>
            </IconButton>
          </div>
        </div>
        <div className="mt-[11px] grid grid-cols-[20px_74px_27px_24px_1fr] items-center gap-y-[5px]">
          <span className="pl-[6px]">寬</span>
          <NumberField label="頁面寬度" value="210 公釐" />
          <span />
          <span className="text-[#b8b8b8]"><PagesIcon /></span>
          <input aria-label="頁數" defaultValue="1" className="h-[21px] w-[69px] rounded-sm border border-[#747474] bg-[#454545] pl-1 outline-none" />
          <span className="pl-[6px]">高</span>
          <NumberField label="頁面高度" value="297 公釐" />
          <span />
          <label className="col-span-2 flex items-center gap-[7px]">
            <input type="checkbox" defaultChecked className="peer sr-only" />
            <Icon w={12} h={12} className="rounded-sm bg-[#cfcfcf] text-[#333]"><path d="M2.500 6l2.500 3 4.500-6" strokeWidth="1.600" /></Icon>
            對頁
          </label>
        </div>
        <h2 className="mt-[9px] h-[23px] leading-[18px]">邊界</h2>
        <div className="flex items-center">
          <div className="grid grid-cols-[20px_74px] items-center gap-y-[5px]">
            <MarginIcon side="top" /><NumberField label="上邊界" value="12.7 公釐" />
            <MarginIcon side="bottom" /><NumberField label="下邊界" value="12.7 公釐" />
          </div>
          <button aria-label="統一所有設定" className="mx-[5px] flex size-[22px] items-center justify-center rounded-sm bg-[#2f2f2f]"><LinkIcon /></button>
          <div className="grid grid-cols-[20px_74px] items-center gap-y-[5px]">
            <MarginIcon side="left" /><NumberField label="內邊界" value="12.7 公釐" />
            <MarginIcon side="right" /><NumberField label="外邊界" value="12.7 公釐" />
          </div>
        </div>
        <div className="mb-[9px] mt-[15px] flex items-center justify-between">
          <span>方向:</span>
          <SelectField label="方向" value="水平" className="w-[120px]" />
        </div>
        <WideButton>調整版面</WideButton>
      </Section>

      <Section className="pb-1.5 pt-[9px]">
        <h2 className="h-[23px] leading-[18px]">頁面</h2>
        <div className="mb-2 flex items-center">
          <SelectField label="目前頁面" value="1" />
          <button aria-label="新增頁面" className="ml-auto mt-1 text-[#c4c4c4]"><Icon w={11} h={11}><rect x=".5" y=".5" width="10" height="10" /><path d="M5.500 3v5M3 5.500h5" /></Icon></button>
          <button aria-label="刪除頁面" className="ml-4 mr-[9px] mt-1 text-[#858585]"><Icon w={11} h={12}><path d="M0 2.500h11M3.500 2V.5h4V2M1.500 3v8.500h8V3M3.500 4v6m2-6v6m2-6v6" /></Icon></button>
        </div>
        <WideButton>編輯頁面</WideButton>
      </Section>

      <Section className="flex h-10 items-center justify-between">
        <span className="pt-1">標尺和格線</span>
        <div className="mr-0.5 flex gap-[3px] text-[#c4c4c4]">
          <IconButton label="顯示尺標" active>
            <Icon w={16} h={16}><path d="M0 2.500h16M2.500 0v16" strokeWidth="4" /><path d="M6 3h10M3 6v10" stroke="#2f2f2f" strokeWidth="2" strokeDasharray="1 2" /></Icon>
          </IconButton>
          <IconButton label="基線格點"><Icon w={16} h={16}><rect x=".5" y=".5" width="15" height="15" /><path d="M0 4.500h16M0 7.500h16M0 10.500h16M0 13h16M3.500 4v9m9-9v9" /></Icon></IconButton>
          <IconButton label="文件格點"><Icon w={16} h={16}><rect x=".5" y=".5" width="15" height="15" /><path d="M5.500 0v16m5-16v16M0 5.500h16m-16 5h16" /></Icon></IconButton>
          <IconButton label="版面格點"><Icon w={16} h={16}><path d="M.5.500h3v15h-3zM6.500.500h3v15h-3zM12.500.500h3v15h-3zM0 4.500h4m2 0h4m2 0h4M0 8h4m2 0h4m2 0h4M0 11.500h4m2 0h4m2 0h4" /></Icon></IconButton>
        </div>
      </Section>

      <Section className="flex h-10 items-center justify-between">
        <span className="pt-1">參考線</span>
        <div className="mr-px flex gap-4 text-[#c4c4c4]">
          <IconButton label="顯示參考線" active><Icon w={16} h={16}><path d="M4.500 0v16M8.500 0v16M0 5.500h16M0 11.500h16" /></Icon></IconButton>
          <IconButton label="鎖定參考線" active><Icon w={18} h={18}><path d="M4.500 1v14M8.500 1v14M1 5.500h16M1 11.500h8" /><path {...solid} d="M10 12h8v6h-8z" /><path d="M12 12v-2q0-2 2-2t2 2" /></Icon></IconButton>
          <IconButton label="智慧型參考線" active><Icon w={18} h={18}><path d="M4.500 1v15M0 5.500h17M9 2L5 5.500 9 9" strokeWidth="1.200" /><path {...solid} d="M15 8l-4 5h3l-2 5 5-6h-3l3-4z" /></Icon></IconButton>
        </div>
      </Section>

      <section className="pl-2.5 pr-[22px] pt-1">
        <h2 className="h-[23px] leading-[18px]">快速動作</h2>
        <div className="mb-2.5 grid grid-cols-2 gap-2.5">
          <WideButton>讀入檔案</WideButton>
          <WideButton>版面格點選項</WideButton>
        </div>
        <WideButton>以文字建立影像</WideButton>
      </section>
    </aside>
  )
}

export default function App() {
  return (
    <div className="flex h-screen flex-col overflow-hidden bg-[#535353] font-['Noto_Sans','Noto_Sans_CJK_TC',sans-serif] text-xs leading-4 text-[#e8e8e8]">
      <TitleBar />
      <nav className="flex h-[23px] shrink-0 items-center gap-[18px] whitespace-nowrap px-2 pb-0.5">
        {menus.map((menu) => (
          <button key={menu} className="min-w-[38px] text-left">{menu}</button>
        ))}
      </nav>
      <ControlBar />
      <div className="flex min-h-0 flex-1 border-y border-[#383838] pl-px">
        <ToolPanel />
        <DocumentWindow />
        <Docks />
        <PropertiesPanel />
      </div>
      <footer className="h-1 shrink-0 border-b border-[#383838]" />
    </div>
  )
}
